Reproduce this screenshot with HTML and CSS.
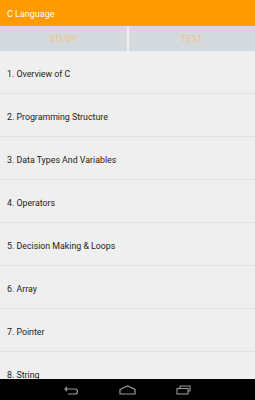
FILE: index.html
```html
<!DOCTYPE html>
<html lang="en">
<head>
    <meta charset="UTF-8">
    <meta name="viewport" content="width=device-width, initial-scale=1.0">
    <title>C Language</title>
    <link rel="stylesheet" href="styles.css">
</head>
<body>
    <div class="app">
        <header class="action-bar">C Language</header>

        <nav class="tabs">
            <div class="tab">STUDY</div>
            <div class="tab-divider"></div>
            <div class="tab">TEST</div>
        </nav>

        <ul class="topics">
            <li>1. Overview of C</li>
            <li>2. Programming Structure</li>
            <li>3. Data Types And Variables</li>
            <li>4. Operators</li>
            <li>5. Decision Making &amp; Loops</li>
            <li>6. Array</li>
            <li>7. Pointer</li>
            <li>8. String</li>
        </ul>

        <div class="nav-bar">
            <svg class="nav-icon" width="15" height="10" viewBox="0 0 15 10">
                <path d="M3 2 L1 4 L3 6 M1 4 H11 Q13.5 4 13.5 6.5 Q13.5 9 11 9 H4" fill="none" stroke="#9a9a9a" stroke-width="1.2"/>
            </svg>
            <svg class="nav-icon" width="17" height="10" viewBox="0 0 17 10">
                <path d="M1 4.5 L8.5 1 L16 4.5 V9 H1 Z" fill="none" stroke="#9a9a9a" stroke-width="1.2"/>
            </svg>
            <svg class="nav-icon" width="15" height="10" viewBox="0 0 15 10">
                <path d="M4 3 V1 H14 V6 H12" fill="none" stroke="#9a9a9a" stroke-width="1.1"/>
                <rect x="1" y="3.5" width="11" height="5.5" fill="none" stroke="#9a9a9a" stroke-width="1.1"/>
            </svg>
        </div>
    </div>
</body>
</html>
```

FILE: styles.css
```css
* {
    margin: 0;
    padding: 0;
    box-sizing: border-box;
}

body {
    font-family: Roboto, "Liberation Sans", sans-serif;
    background: #efefef;
}

.app {
    width: 255px;
    height: 400px;
    display: flex;
    flex-direction: column;
    overflow: hidden;
}

.action-bar {
    height: 26px;
    background: #ff9a00;
    color: #fff;
    font-size: 9px;
    padding: 2px 0 0 7px;
    display: flex;
    align-items: center;
}

.tabs {
    height: 25px;
    background: #d4d9de;
    display: flex;
    align-items: center;
}

.tab {
    flex: 1;
    text-align: center;
    color: #f3c27e;
    font-size: 8.5px;
    letter-spacing: 0.5px;
    padding-top: 1px;
}

.tab-divider {
    width: 2px;
    height: 25px;
    background: #eef1f4;
}

.topics {
    list-style: none;
    flex: 1;
    overflow: hidden;
}

.topics li {
    height: 43px;
    padding: 3px 0 0 7px;
    display: flex;
    align-items: center;
    font-size: 8.8px;
    color: #222;
    border-bottom: 1px solid #e2e2e2;
}

.nav-bar {
    height: 21px;
    background: #000;
    display: flex;
    align-items: center;
    justify-content: center;
    gap: 40px;
}

.nav-icon {
    display: block;
}
```
